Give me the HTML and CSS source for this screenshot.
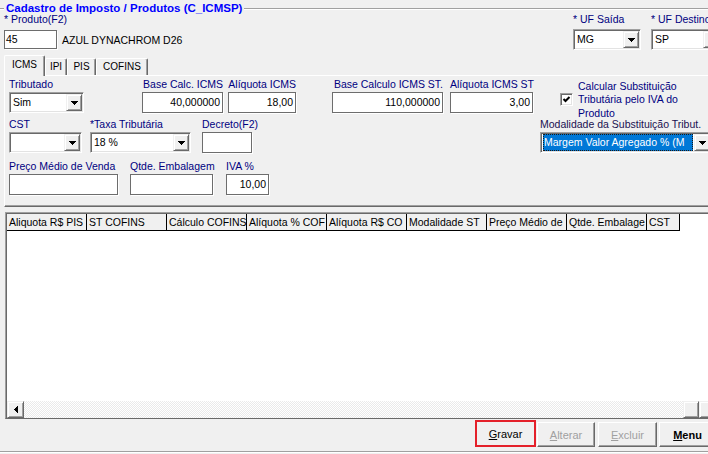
FILE: index.html
```html
<!DOCTYPE html>
<html lang="pt-BR">
<head>
<meta charset="utf-8">
<title>Cadastro de Imposto / Produtos (C_ICMSP)</title>
<link rel="stylesheet" href="styles.css">
</head>
<body>
<div class="form">
  <div class="group-head">
    <span class="etch etch-lead"></span>
    <span class="group-title">Cadastro de Imposto / Produtos (C_ICMSP)</span>
    <span class="etch"></span>
  </div>

  <div class="top-row">
    <div class="field f-produto">
      <span class="lbl">* Produto(F2)</span>
      <div class="produto-line">
        <div class="edit e-produto">45</div>
        <span class="produto-nome">AZUL DYNACHROM D26</span>
      </div>
    </div>
    <div class="field f-uf-saida">
      <span class="lbl">* UF Saída</span>
      <div class="combo"><span class="combo-text">MG</span><span class="combo-btn"><svg width="7" height="4" viewBox="0 0 7 4"><path d="M0 0H7V1H6V2H5V3H4V4H3V3H2V2H1V1H0Z"/></svg></span></div>
    </div>
    <div class="field f-uf-dest">
      <span class="lbl">* UF Destino</span>
      <div class="combo"><span class="combo-text">SP</span><span class="combo-btn"><svg width="7" height="4" viewBox="0 0 7 4"><path d="M0 0H7V1H6V2H5V3H4V4H3V3H2V2H1V1H0Z"/></svg></span></div>
    </div>
  </div>

  <div class="tabs">
    <div class="tab active t-icms">ICMS</div>
    <div class="tab t-ipi">IPI</div>
    <div class="tab t-pis">PIS</div>
    <div class="tab t-cofins">COFINS</div>
  </div>

  <div class="panel">
    <div class="prow prow-1">
      <div class="field w-trib">
        <span class="lbl">Tributado</span>
        <div class="combo"><span class="combo-text">Sim</span><span class="combo-btn"><svg width="7" height="4" viewBox="0 0 7 4"><path d="M0 0H7V1H6V2H5V3H4V4H3V3H2V2H1V1H0Z"/></svg></span></div>
      </div>
      <div class="field num w-basecalc">
        <span class="lbl">Base Calc. ICMS</span>
        <div class="edit">40,000000</div>
      </div>
      <div class="field num w-aliq">
        <span class="lbl">Alíquota ICMS</span>
        <div class="edit">18,00</div>
      </div>
      <div class="field num w-basest">
        <span class="lbl">Base Calculo ICMS ST.</span>
        <div class="edit">110,000000</div>
      </div>
      <div class="field num w-aliqst">
        <span class="lbl">Alíquota ICMS ST</span>
        <div class="edit">3,00</div>
      </div>
      <div class="check-block">
        <span class="checkbox"><svg width="9" height="9" viewBox="0 0 9 9"><polyline points="1.5,4 3.5,6 7.5,2" fill="none" stroke="#000" stroke-width="2"/></svg></span>
        <span class="check-text">Calcular Substituição<br>Tributária pelo IVA do<br>Produto</span>
      </div>
    </div>

    <div class="prow prow-2">
      <div class="field w-cst">
        <span class="lbl">CST</span>
        <div class="combo"><span class="combo-text"></span><span class="combo-btn"><svg width="7" height="4" viewBox="0 0 7 4"><path d="M0 0H7V1H6V2H5V3H4V4H3V3H2V2H1V1H0Z"/></svg></span></div>
      </div>
      <div class="field w-taxa">
        <span class="lbl">*Taxa Tributária</span>
        <div class="combo"><span class="combo-text">18 %</span><span class="combo-btn"><svg width="7" height="4" viewBox="0 0 7 4"><path d="M0 0H7V1H6V2H5V3H4V4H3V3H2V2H1V1H0Z"/></svg></span></div>
      </div>
      <div class="field w-decreto">
        <span class="lbl">Decreto(F2)</span>
        <div class="edit"></div>
      </div>
      <div class="field w-modal">
        <span class="lbl lbl-dark">Modalidade da Substituição Tribut.</span>
        <div class="combo"><span class="combo-text"><span class="selected-text">Margem Valor Agregado % (M</span></span><span class="combo-btn"><svg width="7" height="4" viewBox="0 0 7 4"><path d="M0 0H7V1H6V2H5V3H4V4H3V3H2V2H1V1H0Z"/></svg></span></div>
      </div>
    </div>

    <div class="prow prow-3">
      <div class="field w-preco">
        <span class="lbl">Preço Médio de Venda</span>
        <div class="edit"></div>
      </div>
      <div class="field w-qtde">
        <span class="lbl">Qtde. Embalagem</span>
        <div class="edit"></div>
      </div>
      <div class="field num w-iva">
        <span class="lbl lbl-left">IVA %</span>
        <div class="edit">10,00</div>
      </div>
    </div>
  </div>

  <div class="grid">
    <div class="grid-inner">
      <div class="grid-head">
        <div class="gh-cell">Aliquota R$ PIS</div>
        <div class="gh-cell">ST COFINS</div>
        <div class="gh-cell">Cálculo COFINS</div>
        <div class="gh-cell">Alíquota % COF</div>
        <div class="gh-cell">Alíquota R$ CO</div>
        <div class="gh-cell">Modalidade ST</div>
        <div class="gh-cell">Preço Médio de</div>
        <div class="gh-cell">Qtde. Embalage</div>
        <div class="gh-cell gh-cst">CST</div>
      </div>
      <div class="grid-body"></div>
      <div class="hscroll">
        <span class="sb-btn"><svg width="4" height="7" viewBox="0 0 4 7"><path d="M3 0H4V7H3V6H2V5H1V4H0V3H1V2H2V1H3Z"/></svg></span>
        <span class="sb-track"></span>
        <span class="sb-btn sb-thumb"></span>
        <span class="sb-btn"></span>
      </div>
    </div>
  </div>

  <div class="buttons">
    <div class="btn btn-gravar"><span><u>G</u>ravar</span></div>
    <div class="btn btn-alterar disabled"><span><u>A</u>lterar</span></div>
    <div class="btn btn-excluir disabled"><span><u>E</u>xcluir</span></div>
    <div class="btn btn-menu"><span><u>M</u>enu</span></div>
  </div>
  <div class="bottom-line"></div>
</div>
</body>
</html>
```

FILE: styles.css
```css
* { box-sizing: border-box; }
html, body { margin: 0; padding: 0; overflow: hidden; }
body {
  width: 708px;
  height: 454px;
  background: #f0f0f0;
  font-family: "Liberation Sans", Arial, sans-serif;
  font-size: 10.5px;
  color: #000;
}
.form { width: 708px; height: 454px; overflow: hidden; }

/* group box header */
.group-head { display: flex; align-items: flex-start; height: 13px; }
.etch { flex: 1; height: 2px; margin-top: 8px; border-top: 1px solid #a0a0a0; border-bottom: 1px solid #fff; }
.etch-lead { flex: 0 0 4px; }
.group-title {
  padding: 1px 2px 0 2px;
  font-size: 11.5px;
  font-weight: bold;
  line-height: 14px;
  color: #0000ff;
  white-space: nowrap;
}

/* common field */
.field { display: flex; flex-direction: column; flex: none; }
.lbl { display: block; line-height: 13px; margin-bottom: 1px; color: #000080; white-space: nowrap; }
.lbl-dark { color: #1a1050; }
.num .lbl { text-align: right; }
.num .lbl-left { text-align: left; }

.edit {
  height: 21px;
  background: #fff;
  border: 1px solid #6d6d6d;
  box-shadow: 1px 1px 0 #fff;
  line-height: 19px;
  padding: 0 2px;
  white-space: nowrap;
  overflow: hidden;
}
.num .edit { text-align: right; }

.combo {
  display: flex;
  height: 21px;
  background: #fff;
  border: 1px solid;
  border-color: #a0a0a0 #fff #fff #a0a0a0;
  box-shadow: inset 1px 1px 0 #696969, inset -1px -1px 0 #e3e3e3;
  padding: 1px;
}
.combo-text {
  flex: 1;
  min-width: 0;
  padding-left: 2px;
  line-height: 17px;
  white-space: nowrap;
  overflow: hidden;
}
.combo-btn {
  flex: none;
  width: 16px;
  background: #f0f0f0;
  border: 1px solid;
  border-color: #f0f0f0 #696969 #696969 #f0f0f0;
  box-shadow: inset 1px 1px 0 #fff, inset -1px -1px 0 #a0a0a0;
  display: flex;
  align-items: center;
  justify-content: center;
}
.combo-btn svg { display: block; fill: #000; }

/* top row */
.top-row { display: flex; padding-left: 4px; height: 37px; }
.f-produto { width: 569px; }
.lbl + .produto-line { margin-top: 3px; }
.produto-line { display: flex; align-items: center; }
.e-produto { width: 53px; height: 19px; line-height: 17px; padding-left: 1px; }
.produto-nome { margin-left: 5px; white-space: nowrap; }
.f-uf-saida { width: 68px; margin-right: 10px; }
.f-uf-saida .lbl, .f-uf-dest .lbl { margin-bottom: 3px; }
.f-uf-dest { width: 70px; }

/* tabs */
.tabs { display: flex; align-items: flex-end; height: 20px; margin-top: 5px; padding-left: 4px; }
.tab {
  flex: none;
  height: 17px;
  border-top: 1px solid #fff;
  border-left: 1px solid #fff;
  border-right: 1px solid #696969;
  box-shadow: inset -1px 0 0 #a0a0a0;
  border-radius: 2px 2px 0 0;
  font-size: 10px;
  line-height: 16px;
  text-align: center;
  background: #f0f0f0;
}
.tab.active {
  height: 21px;
  line-height: 18px;
  margin-bottom: -1px;
  position: relative;
  z-index: 1;
}
.t-icms { width: 41px; }
.t-ipi { width: 22px; }
.t-pis { width: 29px; }
.t-cofins { width: 52px; }

/* tab panel */
.panel {
  margin-left: 4px;
  width: 720px;
  height: 132px;
  border-top: 1px solid #fff;
  border-left: 1px solid #fff;
  border-bottom: 1px solid #696969;
  box-shadow: inset 0 -1px 0 #a0a0a0;
  padding-top: 2px;
}
.prow { display: flex; padding-left: 4px; }
.prow-1 { height: 35px; }
.prow-2 { margin-top: 5px; }
.prow-3 { margin-top: 7px; }

.w-trib { width: 75px; }
.w-basecalc { width: 81px; margin-left: 58px; }
.w-aliq { width: 68px; margin-left: 5px; }
.w-basest { width: 111px; margin-left: 36px; }
.w-aliqst { width: 83px; margin-left: 7px; }

.check-block { display: flex; margin-left: 27px; height: 35px; flex: none; }
.checkbox {
  flex: none;
  width: 13px;
  height: 13px;
  margin-top: 15px;
  background: #fff;
  border: 1px solid;
  border-color: #a0a0a0 #fff #fff #a0a0a0;
  box-shadow: inset 1px 1px 0 #696969, inset -1px -1px 0 #e3e3e3;
  display: flex;
  align-items: center;
  justify-content: center;
}
.checkbox svg { display: block; }
.check-text { margin-left: 5px; padding-top: 1.5px; line-height: 13.5px; color: #000080; white-space: nowrap; }

.w-cst { width: 73px; }
.w-taxa { width: 101px; margin-left: 8px; }
.w-decreto { width: 50px; margin-left: 11px; }
.w-modal { width: 172px; margin-left: 288px; }
.w-modal .combo-text { padding-left: 0; }
.selected-text {
  display: block;
  margin: 0 1px 0 1px;
  height: 17px;
  padding-left: 1px;
  background: #0078d7;
  color: #fff;
  outline: 1px dotted #1a1a1a;
  outline-offset: -1px;
  line-height: 17px;
  overflow: hidden;
}

.w-preco { width: 109px; }
.w-qtde { width: 83px; margin-left: 12px; }
.w-iva { width: 43px; margin-left: 13px; }

/* grid */
.grid {
  margin: 5px 0 0 5px;
  width: 711px;
  height: 207px;
  border-top: 1px solid #a0a0a0;
  border-left: 1px solid #a0a0a0;
  border-bottom: 1px solid #696969;
}
.grid-inner {
  height: 205px;
  border-top: 1px solid #696969;
  border-left: 1px solid #696969;
  background: #fff;
  display: flex;
  flex-direction: column;
}
.grid-head { display: flex; height: 17px; flex: none; }
.gh-cell {
  flex: none;
  width: 80px;
  height: 17px;
  padding-left: 2px;
  border-right: 1px solid #000;
  border-bottom: 1px solid #000;
  background: #f0f0f0;
  line-height: 16px;
  white-space: nowrap;
  overflow: hidden;
}
.gh-cst { width: 33px; }
.grid-body { flex: 1; }
.hscroll { display: flex; height: 17px; flex: none; }
.sb-btn {
  flex: none;
  width: 17px;
  height: 17px;
  background: #f0f0f0;
  border: 1px solid;
  border-color: #f0f0f0 #696969 #696969 #f0f0f0;
  box-shadow: inset 1px 1px 0 #fff, inset -1px -1px 0 #a0a0a0;
  display: flex;
  align-items: center;
  justify-content: center;
}
.sb-btn svg { display: block; fill: #000; }
.sb-thumb { width: 16px; }
.sb-track {
  flex: 1;
  background-color: #fff;
  background-image: conic-gradient(#fff 25%, #eaeaea 0 50%, #fff 0 75%, #eaeaea 0);
  background-size: 2px 2px;
}

/* buttons */
.buttons { display: flex; align-items: flex-end; height: 28px; margin-top: 1px; padding-left: 475px; }
.btn {
  flex: none;
  height: 25px;
  margin-bottom: 1px;
  background: #f0f0f0;
  border: 1px solid;
  border-color: #fff #696969 #696969 #fff;
  box-shadow: inset -1px -1px 0 #a0a0a0;
  font-size: 11px;
  display: flex;
  align-items: center;
  justify-content: center;
  white-space: nowrap;
}
.btn-gravar { width: 61px; height: 27px; border: 2px solid #e4202a; box-shadow: none; }
.btn-alterar { width: 58px; margin-left: 1px; }
.btn-excluir { width: 59px; margin-left: 3px; }
.btn-menu { width: 57px; margin-left: 2px; font-weight: bold; }
.disabled { color: #a0a0a0; }

.bottom-line { margin-top: 3px; height: 2px; border-top: 1px solid #a0a0a0; border-bottom: 1px solid #fff; }
```
